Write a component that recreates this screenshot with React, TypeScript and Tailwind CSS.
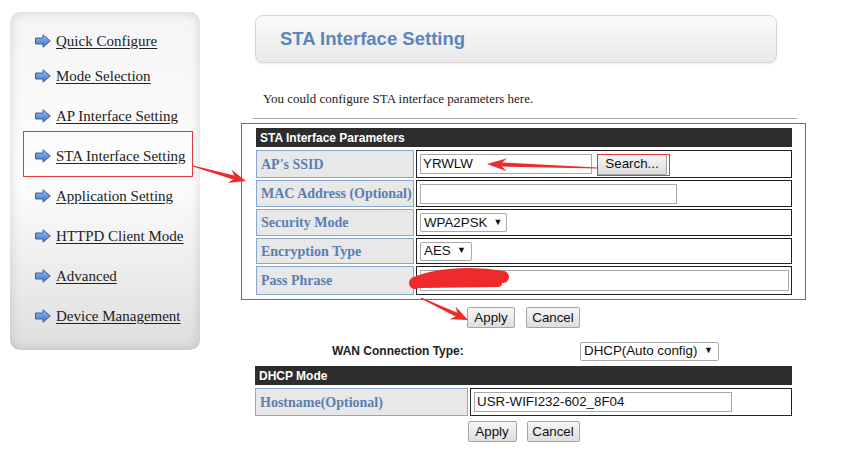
import React from "react";

const serif = { fontFamily: '"Liberation Serif", "Times New Roman", serif' };
const sans = { fontFamily: '"Liberation Sans", Arial, sans-serif' };

const menu = [
  "Quick Configure",
  "Mode Selection",
  "AP Interface Setting",
  "STA Interface Setting",
  "Application Setting",
  "HTTPD Client Mode",
  "Advanced",
  "Device Management",
];

function BlueArrow() {
  return (
    <svg width="16" height="14" viewBox="0 0 16 14" className="shrink-0">
      <defs>
        <linearGradient id="ba" x1="0" y1="0" x2="0" y2="1">
          <stop offset="0" stopColor="#9dbdf0" />
          <stop offset="1" stopColor="#3f6fc4" />
        </linearGradient>
      </defs>
      <path
        d="M0.5 4 L8 4 L8 0.8 L15.3 7 L8 13.2 L8 10 L0.5 10 Z"
        fill="url(#ba)"
        stroke="#3a62a6"
        strokeWidth="1"
        strokeLinejoin="round"
      />
    </svg>
  );
}

function arrowPoints(
  x1: number,
  y1: number,
  x2: number,
  y2: number,
  headLen: number,
  headW: number,
  shaftW: number
) {
  const dx = x2 - x1;
  const dy = y2 - y1;
  const l = Math.hypot(dx, dy);
  const ux = dx / l;
  const uy = dy / l;
  const px = -uy;
  const py = ux;
  const bx = x2 - ux * headLen;
  const by = y2 - uy * headLen;
  const nx = x2 - ux * headLen * 0.75;
  const ny = y2 - uy * headLen * 0.75;
  const pts = [
    [x1 + px * 0.6, y1 + py * 0.6],
    [nx + (px * shaftW) / 2, ny + (py * shaftW) / 2],
    [bx + (px * headW) / 2, by + (py * headW) / 2],
    [x2, y2],
    [bx - (px * headW) / 2, by - (py * headW) / 2],
    [nx - (px * shaftW) / 2, ny - (py * shaftW) / 2],
    [x1 - px * 0.6, y1 - py * 0.6],
  ];
  return pts.map((p) => p.join(",")).join(" ");
}

function Select({ value, width }: { value: string; width: string }) {
  return (
    <div
      className={`flex items-center justify-between h-[19px] ${width} border border-[#a9a9a9] rounded-[2px] bg-white pl-[3px] pr-[5px] text-[13.33px] text-[#111]`}
      style={sans}
    >
      <span>{value}</span>
      <span className="text-[9px] ml-[6px]">▼</span>
    </div>
  );
}

function Btn({ label, width }: { label: string; width: string }) {
  return (
    <div
      className={`flex items-center justify-center h-[21px] ${width} border border-[#a5a5a5] rounded-[2px] bg-gradient-to-b from-[#f6f6f6] to-[#dedede] text-[13.33px] text-[#111]`}
      style={sans}
    >
      {label}
    </div>
  );
}

function Row({
  label,
  h,
  children,
  labelW = "w-[158px]",
}: {
  label: string;
  h: string;
  children?: React.ReactNode;
  labelW?: string;
}) {
  return (
    <div className={`flex gap-[2px] ${h}`}>
      <div
        className={`${labelW} shrink-0 flex items-center bg-[#e8e8e8] border border-[#8aa8cc] pl-[4px] text-[14px] font-bold text-[#5a7fb0]`}
        style={serif}
      >
        {label}
      </div>
      <div className="flex-1 flex items-center border border-[#222] bg-white pl-[3px]">
        {children}
      </div>
    </div>
  );
}

export default function App() {
  return (
    <div className="relative w-[847px] h-[464px] bg-white overflow-hidden">
      <div className="flex">
        {/* sidebar */}
        <div className="ml-[10px] mt-[12px] w-[190px] h-[338px] rounded-[10px] bg-gradient-to-b from-[#f5f5f5] via-[#fdfdfd] to-[#dedede] shadow-[inset_0_0_12px_rgba(0,0,0,0.15)] pt-[19px]">
          {menu.map((m, i) => (
            <div
              key={m}
              className={`relative flex items-center h-[20px] pl-[25px] gap-[5px] ${
                i === 0 ? "" : i === 1 ? "mt-[15px]" : "mt-[20px]"
              }`}
            >
              <BlueArrow />
              <span
                className="text-[15px] text-[#222] underline underline-offset-2"
                style={serif}
              >
                {m}
              </span>
            </div>
          ))}
        </div>

        {/* main */}
        <div className="ml-[41px] w-[565px]">
          <div className="ml-[14px] mt-[15px] w-[522px] h-[48px] rounded-[8px] border border-[#d6d6d6] bg-gradient-to-b from-[#fafafa] to-[#e9e9e9] shadow-[0_1px_2px_rgba(0,0,0,0.08)] flex items-center pl-[24px]">
            <span className="text-[18.5px] font-bold text-[#5b86bb]" style={sans}>
              STA Interface Setting
            </span>
          </div>

          <div className="ml-[22px] mt-[28px] text-[13px] leading-[16px] text-[#222]" style={serif}>
            You could configure STA interface parameters here.
          </div>
          <div className="ml-[12px] mt-[11px] w-[544px] h-px bg-[#b3a3a3]" />

          <div className="mt-[4px] pt-[5px] pb-[5px] pl-[15px] pr-[14px]">
            <div
              className="h-[19px] bg-[#2d2d2d] text-white text-[12px] font-bold flex items-center pl-[4px] mb-[3px]"
              style={sans}
            >
              STA Interface Parameters
            </div>
            <div className="flex flex-col gap-[2px]">
              <Row label="AP's SSID" h="h-[28px]">
                <div
                  className="h-[20px] w-[172px] border border-[#a9a9a9] text-[13.33px] pl-[2px] flex items-center text-[#111]"
                  style={sans}
                >
                  YRWLW
                </div>
                <div className="ml-[5px] pr-[3px]">
                  <Btn label="Search..." width="w-[70px]" />
                </div>
              </Row>
              <Row label="MAC Address (Optional)" h="h-[27px]">
                <div className="h-[20px] w-[257px] border border-[#a9a9a9]" />
              </Row>
              <Row label="Security Mode" h="h-[27px]">
                <Select value="WPA2PSK" width="w-[87px]" />
              </Row>
              <Row label="Encryption Type" h="h-[26px]">
                <Select value="AES" width="w-[52px]" />
              </Row>
              <Row label="Pass Phrase" h="h-[29px]">
                <div className="h-[21px] w-[369px] border border-[#a9a9a9]" />
              </Row>
            </div>
          </div>

          <div className="mt-[7px] flex justify-center gap-[11px]">
            <Btn label="Apply" width="w-[48px]" />
            <Btn label="Cancel" width="w-[54px]" />
          </div>

          <div className="mt-[14px] flex items-center h-[18px]">
            <span className="ml-[91px] w-[248px] text-[12px] font-bold text-[#222]" style={sans}>
              WAN Connection Type:
            </span>
            <Select value="DHCP(Auto config)" width="w-[139px]" />
          </div>

          <div className="ml-[14px] mr-[14px] mt-[6px]">
            <div
              className="h-[19px] bg-[#2d2d2d] text-white text-[12px] font-bold flex items-center pl-[4px] mb-[3px]"
              style={sans}
            >
              DHCP Mode
            </div>
            <Row label="Hostname(Optional)" h="h-[28px]" labelW="w-[213px]">
              <div
                className="h-[20px] w-[258px] border border-[#a9a9a9] text-[13.33px] pl-[2px] flex items-center text-[#111]"
                style={sans}
              >
                USR-WIFI232-602_8F04
              </div>
            </Row>
          </div>

          <div className="mt-[5px] flex justify-center gap-[10px]">
            <Btn label="Apply" width="w-[49px]" />
            <Btn label="Cancel" width="w-[53px]" />
          </div>
        </div>
      </div>

      {/* annotations: red frames, arrows and redaction */}
      <svg
        className="absolute inset-0 pointer-events-none"
        width="847"
        height="464"
        viewBox="0 0 847 464"
      >
        <rect x="23.5" y="131.5" width="169" height="45" fill="none" stroke="#e03a3a" strokeWidth="1" />
        <rect x="241.5" y="123.5" width="564" height="176" fill="none" stroke="#e03a3a" strokeWidth="1" />
        <rect x="597.5" y="154.5" width="72" height="21" fill="none" stroke="#e03a3a" strokeWidth="1" />
        <polygon points={arrowPoints(193, 166, 246, 181, 17, 14, 4)} fill="#ee2b2b" />
        <polygon points={arrowPoints(597, 168, 487, 164, 20, 13, 4)} fill="#ee2b2b" />
        <polygon points={arrowPoints(421, 298, 468, 320, 17, 14, 4)} fill="#ee2b2b" />
        <path
          d="M415 283 C 432 275, 468 271, 503 277"
          stroke="#ee2b2b"
          strokeWidth="12"
          strokeLinecap="round"
          fill="none"
        />
        <path
          d="M420 284 L 498 283"
          stroke="#ee2b2b"
          strokeWidth="8"
          strokeLinecap="round"
          fill="none"
        />
      </svg>
    </div>
  );
}
